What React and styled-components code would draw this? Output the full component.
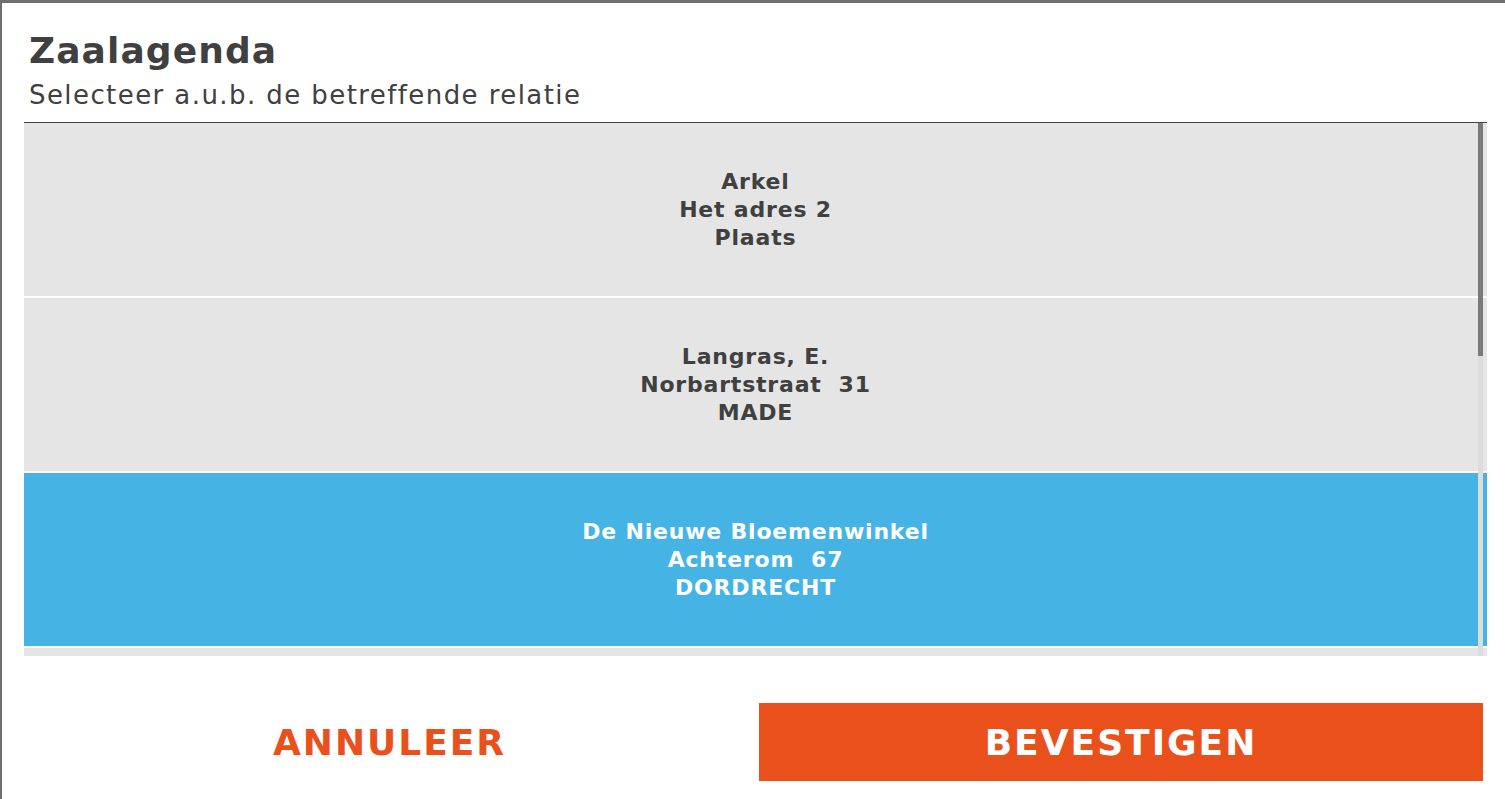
import React, { useState } from 'react';
import styled, { createGlobalStyle } from 'styled-components';

const GlobalStyle = createGlobalStyle`
  html, body {
    margin: 0;
    padding: 0;
    height: 100%;
    overflow: hidden;
  }
  body {
    font-family: 'DejaVu Sans', Verdana, sans-serif;
    background: #6f6f6f;
  }
`;

const Overlay = styled.div`
  height: 799px;
  padding: 3px 0 0 2px;
  box-sizing: border-box;
  background: #6f6f6f;
`;

const Dialog = styled.div`
  height: 100%;
  background: #fff;
  display: flex;
  flex-direction: column;
  color: #404040;
`;

const Header = styled.div`
  padding: 27px 0 0 27px;
  height: 119px;
  box-sizing: border-box;
`;

const Title = styled.h1`
  margin: 0;
  font-size: 36px;
  line-height: 42px;
  font-weight: bold;
  letter-spacing: 1.1px;
  color: #404040;
`;

const Subtitle = styled.div`
  margin-top: 7px;
  font-size: 26px;
  line-height: 32px;
  letter-spacing: 1.42px;
  color: #404040;
`;

const ListWrap = styled.div`
  position: relative;
  margin: 0 18px 0 22px;
  border-top: 1px solid #444;
  height: 533px;
  overflow: hidden;
`;

const Row = styled.div`
  height: 173px;
  margin-bottom: 2px;
  background: ${(p) => (p.$active ? '#45b4e4' : '#e5e5e5')};
  color: ${(p) => (p.$active ? '#fff' : '#404040')};
  display: flex;
  flex-direction: column;
  align-items: center;
  justify-content: center;
  font-size: 22px;
  line-height: 28px;
  font-weight: bold;
  letter-spacing: 0.8px;
  white-space: pre;
  cursor: pointer;
`;

const Track = styled.div`
  position: absolute;
  top: 0;
  right: 4px;
  width: 5px;
  height: 100%;
  background: #dcdcdc;
`;

const Thumb = styled.div`
  width: 100%;
  height: 233px;
  background: #7a7a7a;
`;

const Footer = styled.div`
  display: grid;
  grid-template-columns: 731px 1fr;
  gap: 4px;
  padding: 47px 22px 0 22px;
`;

const Button = styled.button`
  height: 78px;
  border: none;
  font-family: inherit;
  font-size: 36px;
  font-weight: bold;
  letter-spacing: 2px;
  cursor: pointer;
  background: ${(p) => (p.$primary ? '#e9501c' : 'transparent')};
  color: ${(p) => (p.$primary ? '#fff' : '#e9501c')};
`;

const relaties = [
  { naam: 'Arkel', adres: 'Het adres 2', plaats: 'Plaats' },
  { naam: 'Langras, E.', adres: 'Norbartstraat  31', plaats: 'MADE' },
  { naam: 'De Nieuwe Bloemenwinkel', adres: 'Achterom  67', plaats: 'DORDRECHT' },
  { naam: '', adres: '', plaats: '' },
];

export default function App() {
  const [gekozen, setGekozen] = useState(2);

  return (
    <>
      <GlobalStyle />
      <Overlay>
        <Dialog>
          <Header>
            <Title>Zaalagenda</Title>
            <Subtitle>Selecteer a.u.b. de betreffende relatie</Subtitle>
          </Header>
          <ListWrap>
            {relaties.map((r, i) => (
              <Row key={i} $active={i === gekozen} onClick={() => setGekozen(i)}>
                <span>{r.naam}</span>
                <span>{r.adres}</span>
                <span>{r.plaats}</span>
              </Row>
            ))}
            <Track>
              <Thumb />
            </Track>
          </ListWrap>
          <Footer>
            <Button>ANNULEER</Button>
            <Button $primary>BEVESTIGEN</Button>
          </Footer>
        </Dialog>
      </Overlay>
    </>
  );
}
